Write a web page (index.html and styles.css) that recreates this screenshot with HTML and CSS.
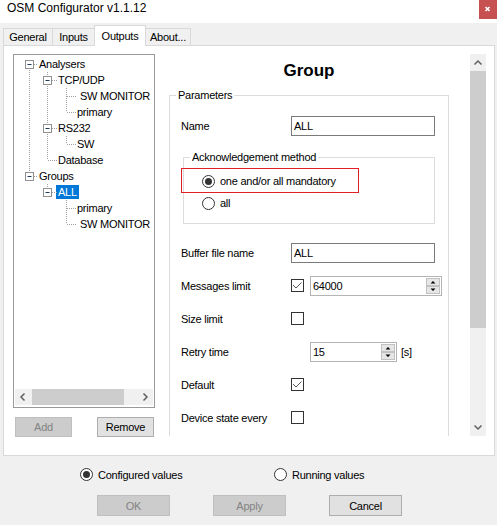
FILE: index.html
```html
<!DOCTYPE html>
<html>
<head>
<meta charset="utf-8">
<title>OSM Configurator</title>
<link rel="stylesheet" href="styles.css">
</head>
<body>
<div class="titlebar">
  <span class="title">OSM Configurator v1.1.12</span>
  <span class="close"><svg width="18" height="19" viewBox="0 0 18 19"><path d="M6.5 7 L10.5 11 M10.5 7 L6.5 11" stroke="#fff" stroke-width="1.7" fill="none"/></svg></span>
</div>
<div class="tabs">
  <div class="tab t-general">General</div>
  <div class="tab t-inputs">Inputs</div>
  <div class="tab t-outputs active">Outputs</div>
  <div class="tab t-about">About...</div>
</div>
<div class="panel">
  <div class="left">
    <div class="tree">
      <svg class="tree-lines" width="140" height="200" viewBox="0 0 140 200">
        <g stroke="#a0a0a0" stroke-width="1" stroke-dasharray="1 1" fill="none">
          <path d="M15.5 9 V121"/>
          <path d="M20 9.5 H24 M20 121.5 H24"/>
          <path d="M33.5 17 V105"/>
          <path d="M38 25.5 H43 M38 73.5 H43 M34 105.5 H43"/>
          <path d="M33.5 129 V133"/>
          <path d="M38 137.5 H43"/>
          <path d="M52.5 33 V57 M53 41.5 H62 M53 57.5 H62"/>
          <path d="M52.5 81 V89 M53 89.5 H62"/>
          <path d="M52.5 145 V169 M53 153.5 H62 M53 169.5 H62"/>
        </g>
        <g fill="#fff" stroke="#919191">
          <rect x="11.5" y="5.5" width="8" height="8"/>
          <rect x="29.5" y="21.5" width="8" height="8"/>
          <rect x="29.5" y="69.5" width="8" height="8"/>
          <rect x="11.5" y="117.5" width="8" height="8"/>
          <rect x="29.5" y="133.5" width="8" height="8"/>
        </g>
        <g stroke="#1e395b" stroke-width="1">
          <path d="M13.5 9.5 H17.5 M31.5 25.5 H35.5 M31.5 73.5 H35.5 M13.5 121.5 H17.5 M31.5 137.5 H35.5"/>
        </g>
      </svg>
      <div class="tree-items">
        <div class="node l0">Analysers</div>
        <div class="node l1">TCP/UDP</div>
        <div class="node l2 sp">SW MONITOR</div>
        <div class="node l2">primary</div>
        <div class="node l1">RS232</div>
        <div class="node l2">SW</div>
        <div class="node l1">Database</div>
        <div class="node l0">Groups</div>
        <div class="node l1 sel-row"><span class="sel">ALL</span></div>
        <div class="node l2">primary</div>
        <div class="node l2 sp">SW MONITOR</div>
      </div>
      <div class="hscroll">
        <span class="harrow"><svg width="17" height="16" viewBox="0 0 17 16"><polyline points="9.5,4.5 6,8 9.5,11.5" stroke="#606060" stroke-width="1.5" fill="none"/></svg></span>
        <span class="hthumb"></span>
        <span class="htrack"></span>
        <span class="harrow"><svg width="17" height="16" viewBox="0 0 17 16"><polyline points="7.5,4.5 11,8 7.5,11.5" stroke="#606060" stroke-width="1.5" fill="none"/></svg></span>
      </div>
    </div>
    <div class="tree-buttons">
      <div class="btn disabled">Add</div>
      <div class="btn">Remove</div>
    </div>
  </div>
  <div class="viewport">
    <div class="scroll-content">
      <div class="heading">Group</div>
      <div class="groupbox params">
        <span class="legend">Parameters</span>
        <div class="row">
          <span class="label">Name</span>
          <div class="textbox wide">ALL</div>
        </div>
        <div class="ackgroup">
          <span class="legend ack-legend">Acknowledgement method</span>
          <div class="highlight"></div>
          <div class="radio-row"><span class="radio on"></span><span class="rtext">one and/or all mandatory</span></div>
          <div class="radio-row"><span class="radio"></span><span class="rtext">all</span></div>
        </div>
        <div class="row">
          <span class="label">Buffer file name</span>
          <div class="textbox wide">ALL</div>
        </div>
        <div class="row">
          <span class="label">Messages limit</span>
          <span class="check"><svg width="11" height="11" viewBox="0 0 11 11"><polyline points="1,5 4,8 9.5,2.5" stroke="#555" stroke-width="1" fill="none"/></svg></span>
          <div class="num num-msg">
            <span class="num-text">64000</span>
            <span class="spin"><svg width="14" height="16" viewBox="0 0 14 16"><rect x="0.5" y="0.5" width="13" height="7" fill="#e6e6e6" stroke="#c2c2c2"/><rect x="0.5" y="8.5" width="13" height="7" fill="#e6e6e6" stroke="#c2c2c2"/><path d="M4.5 5.5 L7 3 L9.5 5.5Z M4.5 10.5 L7 13 L9.5 10.5Z" fill="#000"/></svg></span>
          </div>
        </div>
        <div class="row">
          <span class="label">Size limit</span>
          <span class="check"></span>
        </div>
        <div class="row">
          <span class="label">Retry time</span>
          <div class="num num-retry">
            <span class="num-text">15</span>
            <span class="spin"><svg width="14" height="16" viewBox="0 0 14 16"><rect x="0.5" y="0.5" width="13" height="7" fill="#e6e6e6" stroke="#c2c2c2"/><rect x="0.5" y="8.5" width="13" height="7" fill="#e6e6e6" stroke="#c2c2c2"/><path d="M4.5 5.5 L7 3 L9.5 5.5Z M4.5 10.5 L7 13 L9.5 10.5Z" fill="#000"/></svg></span>
          </div>
          <span class="unit">[s]</span>
        </div>
        <div class="row">
          <span class="label">Default</span>
          <span class="check"><svg width="11" height="11" viewBox="0 0 11 11"><polyline points="1,5 4,8 9.5,2.5" stroke="#555" stroke-width="1" fill="none"/></svg></span>
        </div>
        <div class="row">
          <span class="label">Device state every</span>
          <span class="check"></span>
        </div>
      </div>
    </div>
    <div class="vscroll">
      <span class="varrow"><svg width="16" height="17" viewBox="0 0 16 17"><polyline points="4.5,10.5 8,7 11.5,10.5" stroke="#606060" stroke-width="1.5" fill="none"/></svg></span>
      <span class="vthumb"></span>
      <span class="vtrack"></span>
      <span class="varrow"><svg width="16" height="17" viewBox="0 0 16 17"><polyline points="4.5,6.5 8,10 11.5,6.5" stroke="#606060" stroke-width="1.5" fill="none"/></svg></span>
    </div>
  </div>
</div>
<div class="bottom">
  <div class="mode-row">
    <div class="mode mode-configured"><span class="radio on"></span><span class="rtext">Configured values</span></div>
    <div class="mode"><span class="radio"></span><span class="rtext">Running values</span></div>
  </div>
  <div class="dialog-buttons">
    <div class="btn big disabled">OK</div>
    <div class="btn big disabled">Apply</div>
    <div class="btn big">Cancel</div>
  </div>
</div>
</body>
</html>
```

FILE: styles.css
```css
* { box-sizing: border-box; }
html, body { margin: 0; padding: 0; }
body {
  width: 497px;
  height: 525px;
  overflow: hidden;
  background: #f0f0f0;
  font-family: "Liberation Sans", Arial, sans-serif;
  font-size: 11px;
  letter-spacing: -0.25px;
  color: #000;
}

.titlebar {
  height: 23px;
  background: #fff;
  display: flex;
  align-items: flex-start;
}
.title {
  font-size: 12px;
  line-height: 16px;
  padding-left: 7px;
  letter-spacing: 0;
}
.close {
  margin-left: auto;
  width: 18px;
  height: 19px;
  background: #c75050;
  display: flex;
}

.tabs {
  height: 22px;
  display: flex;
  align-items: flex-end;
  padding-left: 3px;
}
.tab {
  height: 17px;
  border: 1px solid #d9d9d9;
  border-bottom: none;
  background: #f0f0f0;
  display: flex;
  align-items: center;
  justify-content: center;
  margin-left: -1px;
  line-height: 13px;
}
.t-general { margin-left: 0; width: 50px; }
.t-inputs { width: 43px; }
.t-outputs { width: 52px; }
.t-about { width: 46px; }
.tab.active {
  height: 21px;
  margin-bottom: -1px;
  background: #fff;
  position: relative;
  z-index: 1;
}

.panel {
  margin-left: 3px;
  width: 492px;
  height: 411px;
  border: 1px solid #d9d9d9;
  background: #fff;
  display: flex;
  padding: 8px 0 0 9px;
}

.left {
  width: 142px;
  display: flex;
  flex-direction: column;
}
.tree {
  height: 354px;
  border: 1px solid #9a9a9a;
  position: relative;
  display: flex;
  flex-direction: column;
  overflow: hidden;
}
.tree-lines {
  position: absolute;
  left: 0;
  top: 0;
}
.tree-items {
  flex: 1;
  padding-top: 1px;
  overflow: hidden;
}
.node {
  height: 16px;
  line-height: 16px;
  white-space: nowrap;
}
.l0 { padding-left: 25px; }
.l1 { padding-left: 44px; }
.l2 { padding-left: 63px; }
.l2.sp { padding-left: 66px; }
.sel-row { padding-left: 42px; display: flex; align-items: center; }
.sel {
  background: #0078d7;
  color: #fff;
  padding: 0 2px;
  line-height: 14px;
  height: 14px;
}
.hscroll {
  height: 16px;
  margin: 0 1px 2px 1px;
  background: #f0f0f0;
  display: flex;
}
.harrow { width: 17px; height: 16px; display: flex; }
.hthumb { width: 92px; background: #cdcdcd; }
.htrack { flex: 1; }

.tree-buttons {
  display: flex;
  margin-top: 9px;
  padding-left: 2px;
  gap: 25px;
}
.btn {
  width: 57px;
  height: 20px;
  border: 1px solid #adadad;
  background: #e1e1e1;
  display: flex;
  align-items: center;
  justify-content: center;
}
.btn.disabled {
  background: #cccccc;
  border-color: #bfbfbf;
  color: #838383;
}
.btn.big { width: 73px; height: 21px; }

.viewport {
  margin-left: 5px;
  width: 326px;
  height: 382px;
  display: flex;
  overflow: hidden;
}
.scroll-content {
  width: 310px;
  height: 382px;
  overflow: hidden;
}
.heading {
  margin-left: 9px;
  width: 280px;
  height: 41px;
  padding-top: 7px;
  line-height: 20px;
  text-align: center;
  font-size: 17px;
  font-weight: bold;
  letter-spacing: 0;
}
.groupbox {
  position: relative;
  margin-left: 9px;
  width: 280px;
  border: 1px solid #dcdcdc;
  padding: 13px 0 30px 11px;
}
.legend {
  position: absolute;
  left: 6px;
  top: -7px;
  padding: 0 2px;
  line-height: 13px;
  background: #fff;
}
.row {
  display: flex;
  align-items: center;
  height: 33px;
}
.label { width: 110px; flex: none; }
.textbox {
  height: 20px;
  border: 1px solid #7a7a7a;
  padding-left: 2px;
  line-height: 18px;
}
.textbox.wide { width: 144px; }

.ackgroup {
  position: relative;
  margin: 15px 0 12px 2px;
  width: 252px;
  height: 67px;
  border: 1px solid #dcdcdc;
  padding: 12px 0 0 18px;
}
.ack-legend { left: 6px; }
.highlight {
  position: absolute;
  left: -3px;
  top: 10px;
  width: 178px;
  height: 25px;
  border: 1px solid #e31e26;
}
.radio-row {
  height: 22px;
  display: flex;
  align-items: center;
}
.radio {
  width: 13px;
  height: 13px;
  flex: none;
  border: 1px solid #333;
  border-radius: 50%;
  display: inline-flex;
  align-items: center;
  justify-content: center;
  background: #fff;
}
.radio.on::after {
  content: "";
  width: 7px;
  height: 7px;
  border-radius: 50%;
  background: #333;
}
.rtext { margin-left: 5px; }

.check {
  width: 13px;
  height: 13px;
  flex: none;
  border: 1px solid #333;
  display: flex;
}
.num {
  height: 20px;
  border: 1px solid #b4b4b4;
  display: flex;
  align-items: center;
}
.num-msg { margin-left: 6px; width: 132px; }
.num-retry { margin-left: 19px; width: 87px; }
.num-text { flex: 1; padding-left: 2px; line-height: 18px; }
.spin { width: 14px; height: 16px; margin-right: 1px; display: flex; }
.unit { margin-left: 4px; }

.vscroll {
  width: 16px;
  display: flex;
  flex-direction: column;
  background: #f0f0f0;
}
.varrow { height: 17px; display: flex; flex: none; }
.vthumb { height: 257px; background: #cdcdcd; flex: none; }
.vtrack { flex: 1; }

.bottom {
  padding-top: 12px;
}
.mode-row {
  display: flex;
  align-items: center;
  height: 13px;
  padding-left: 80px;
}
.mode { display: flex; align-items: center; }
.mode-configured { width: 194px; }
.dialog-buttons {
  display: flex;
  margin-top: 14px;
  padding-left: 97px;
  gap: 43px;
}
```
